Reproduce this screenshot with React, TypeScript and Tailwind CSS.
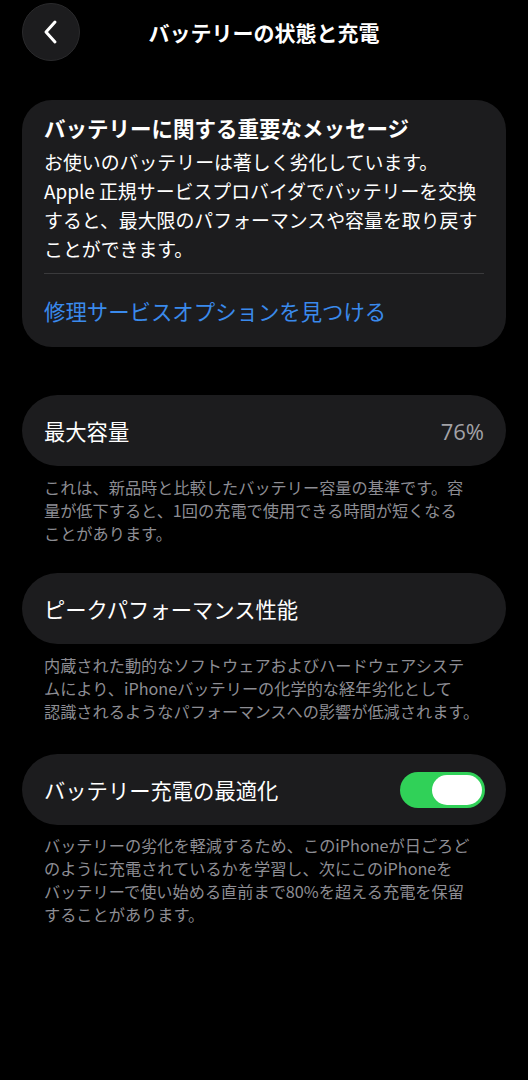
import React from "react";

const font = { fontFamily: '"Noto Sans CJK JP", "Noto Sans", sans-serif' };

function Footer({ lines }: { lines: string[] }) {
  return (
    <div className="px-[44px] text-[16.2px] leading-[23px] text-[#8d8d93]">
      {lines.map((l, i) => (
        <div key={i} className="whitespace-nowrap">{l}</div>
      ))}
    </div>
  );
}

export default function App() {
  return (
    <div className="min-h-[1080px] w-[528px] bg-black text-white" style={font}>
      <div className="relative flex h-[64px] items-center justify-center">
        <button className="absolute left-[22px] top-[3px] flex h-[58px] w-[58px] items-center justify-center rounded-full border border-[#2a2a2c] bg-[#1c1c1e]">
          <svg width="22" height="26" viewBox="0 0 22 26" fill="none">
            <path d="M15 3 L6 13 L15 23" stroke="white" strokeWidth="3" strokeLinecap="round" strokeLinejoin="round" />
          </svg>
        </button>
        <div className="text-[21px] font-semibold leading-[28px]">バッテリーの状態と充電</div>
      </div>

      <div className="mx-[22px] mt-[36px] rounded-[30px] bg-[#1c1c1e] px-[22px] pb-[22px] pt-[14px]">
        <div className="text-[21.5px] font-semibold leading-[28px]">バッテリーに関する重要なメッセージ</div>
        <div className="mt-[5px] text-[18.9px] leading-[29px] text-white">
          <div className="whitespace-nowrap">お使いのバッテリーは著しく劣化しています。</div>
          <div className="whitespace-nowrap">Apple 正規サービスプロバイダでバッテリーを交換</div>
          <div className="whitespace-nowrap">すると、最大限のパフォーマンスや容量を取り戻す</div>
          <div className="whitespace-nowrap">ことができます。</div>
        </div>
        <div className="mt-[10px] h-px bg-[#3a3a3c]" />
        <div className="mt-[23px] text-[21.4px] leading-[28px] text-[#3a8aec]">修理サービスオプションを見つける</div>
      </div>

      <div className="mx-[22px] mt-[48px] flex h-[71px] items-center justify-between rounded-full bg-[#1c1c1e] px-[22px]">
        <div className="text-[21.3px] leading-[28px]">最大容量</div>
        <div className="text-[22px] font-normal leading-[28px] text-[#a2a2a7]" style={{ fontFamily: '"Open Sans", "Noto Sans", sans-serif' }}>76%</div>
      </div>
      <div className="mt-[10px]">
        <Footer
          lines={[
            "これは、新品時と比較したバッテリー容量の基準です。容",
            "量が低下すると、1回の充電で使用できる時間が短くなる",
            "ことがあります。",
          ]}
        />
      </div>

      <div className="mx-[22px] mt-[28px] flex h-[71px] items-center rounded-full bg-[#1c1c1e] px-[22px]">
        <div className="text-[21.3px] leading-[28px]">ピークパフォーマンス性能</div>
      </div>
      <div className="mt-[10px]">
        <Footer
          lines={[
            "内蔵された動的なソフトウェアおよびハードウェアシステ",
            "ムにより、iPhoneバッテリーの化学的な経年劣化として",
            "認識されるようなパフォーマンスへの影響が低減されます。",
          ]}
        />
      </div>

      <div className="mx-[22px] mt-[31px] flex h-[71px] items-center justify-between rounded-full bg-[#1c1c1e] pl-[22px] pr-[21px]">
        <div className="text-[21.3px] leading-[28px]">バッテリー充電の最適化</div>
        <div className="flex h-[36px] w-[85px] items-center justify-end rounded-full bg-[#30d158] p-[3px]">
          <div className="h-[30px] w-[50px] rounded-full bg-white" />
        </div>
      </div>
      <div className="mt-[9px]">
        <Footer
          lines={[
            "バッテリーの劣化を軽減するため、このiPhoneが日ごろど",
            "のように充電されているかを学習し、次にこのiPhoneを",
            "バッテリーで使い始める直前まで80%を超える充電を保留",
            "することがあります。",
          ]}
        />
      </div>
    </div>
  );
}
